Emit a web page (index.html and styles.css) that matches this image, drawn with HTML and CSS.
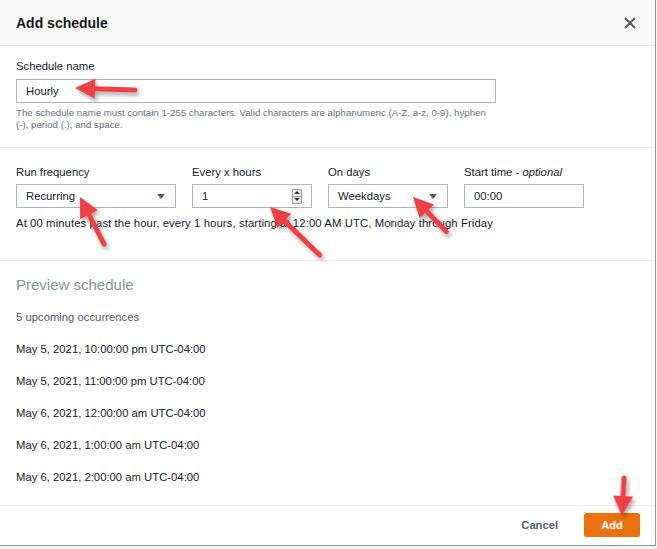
FILE: index.html
```html
<!DOCTYPE html>
<html lang="en">
<head>
<meta charset="utf-8">
<title>Add schedule</title>
<link rel="stylesheet" href="styles.css">
</head>
<body>
<div class="modal">
  <div class="header">
    <h1 class="title">Add schedule</h1>
    <svg class="close" width="12" height="12" viewBox="0 0 12 12"><path d="M1 1 L11 11 M11 1 L1 11" stroke="#545b64" stroke-width="1.8" fill="none"/></svg>
  </div>

  <div class="section name-section">
    <div class="label">Schedule name</div>
    <div class="input wide"><span>Hourly</span></div>
    <div class="help">The schedule name must contain 1-255 characters. Valid characters are alphanumeric (A-Z, a-z, 0-9), hyphen (-), period (.), and space.</div>
  </div>

  <div class="section freq-section">
    <div class="fields">
      <div class="field f-wide">
        <div class="label">Run frequency</div>
        <div class="input select"><span>Recurring</span><i class="caret"></i></div>
      </div>
      <div class="field">
        <div class="label">Every x hours</div>
        <div class="input number"><span>1</span>
          <span class="spinner"><span class="spin up"><i></i></span><span class="spin down"><i></i></span></span>
        </div>
      </div>
      <div class="field">
        <div class="label">On days</div>
        <div class="input select"><span>Weekdays</span><i class="caret"></i></div>
      </div>
      <div class="field">
        <div class="label">Start time - <em>optional</em></div>
        <div class="input"><span>00:00</span></div>
      </div>
    </div>
    <div class="desc">At 00 minutes past the hour, every 1 hours, starting at 12:00 AM UTC, Monday through Friday</div>
  </div>

  <div class="preview">
    <h2 class="preview-title">Preview schedule</h2>
    <div class="count">5 upcoming occurrences</div>
    <ul class="dates">
      <li>May 5, 2021, 10:00:00 pm UTC-04:00</li>
      <li>May 5, 2021, 11:00:00 pm UTC-04:00</li>
      <li>May 6, 2021, 12:00:00 am UTC-04:00</li>
      <li>May 6, 2021, 1:00:00 am UTC-04:00</li>
      <li>May 6, 2021, 2:00:00 am UTC-04:00</li>
    </ul>
  </div>

  <div class="footer">
    <button class="btn cancel">Cancel</button>
    <button class="btn primary">Add</button>
  </div>

  <svg class="arrows" width="656" height="546" viewBox="0 0 656 546">
    <defs>
      <filter id="sh" x="-50%" y="-50%" width="200%" height="200%">
        <feDropShadow dx="2" dy="3" stdDeviation="2" flood-color="#000" flood-opacity="0.35"/>
      </filter>
      <g id="arr">
        <polygon points="0,0 20,-10 20,10" fill="#ef4046"/>
      </g>
    </defs>
    <g filter="url(#sh)">
      <g transform="translate(75 88) rotate(2)">
        <use href="#arr"/><line x1="18" y1="0" x2="60" y2="0" stroke="#ef4046" stroke-width="5" stroke-linecap="round"/>
      </g>
      <g transform="translate(80 197) rotate(63)">
        <use href="#arr"/><line x1="18" y1="0" x2="53" y2="0" stroke="#ef4046" stroke-width="5" stroke-linecap="round"/>
      </g>
      <g transform="translate(270 207) rotate(44)">
        <use href="#arr"/><line x1="18" y1="0" x2="69" y2="0" stroke="#ef4046" stroke-width="5" stroke-linecap="round"/>
      </g>
      <g transform="translate(413 197) rotate(46)">
        <use href="#arr"/><line x1="18" y1="0" x2="48" y2="0" stroke="#ef4046" stroke-width="5" stroke-linecap="round"/>
      </g>
      <g transform="translate(622 516) rotate(-87)">
        <use href="#arr"/><line x1="18" y1="0" x2="38" y2="0" stroke="#ef4046" stroke-width="5" stroke-linecap="round"/>
      </g>
    </g>
  </svg>
</div>
</body>
</html>
```

FILE: styles.css
```css
* { box-sizing: border-box; }

body {
  margin: 0;
  background: #f2f3f3;
  font-family: "Liberation Sans", Arial, sans-serif;
  font-size: 11.3px;
  color: #16191f;
}

.modal {
  position: relative;
  width: 656px;
  height: 546px;
  background: #fff;
  border-right: 1px solid #8d9a9b;
  border-bottom: 1px solid #8d9a9b;
  display: flex;
  flex-direction: column;
}

.header {
  height: 46px;
  background: #fafafa;
  border-bottom: 1px solid #eaeded;
  display: flex;
  align-items: center;
  justify-content: space-between;
  padding: 0 19px 0 16px;
}

.title {
  margin: 0;
  font-size: 14px;
  font-weight: 700;
  color: #16191f;
}

.close { display: block; }

.section {
  border-bottom: 1px solid #eaeded;
  padding: 0 16px;
}

.name-section {
  padding-top: 12px;
  padding-bottom: 16px;
}

.label {
  line-height: 16px;
  color: #16191f;
}

.label em { font-style: italic; }

.input {
  height: 24px;
  border: 1px solid #aab7b8;
  display: flex;
  align-items: center;
  padding: 0 9px;
  margin-top: 4px;
  color: #16191f;
}

.name-section .input { margin-top: 5px; }

.wide { width: 480px; }

.help {
  margin-top: 4px;
  width: 480px;
  font-size: 9.7px;
  line-height: 12px;
  color: #687078;
}

.freq-section {
  padding-top: 16px;
  padding-bottom: 29px;
}

.fields {
  display: flex;
  gap: 16px;
}

.field { width: 120px; }
.field.f-wide { width: 160px; }

.select { justify-content: space-between; padding-right: 10px; }

.caret {
  width: 0;
  height: 0;
  border-left: 4px solid transparent;
  border-right: 4px solid transparent;
  border-top: 5px solid #545b64;
}

.number { justify-content: space-between; padding-right: 9px; }

.spinner {
  display: flex;
  flex-direction: column;
  width: 10px;
  height: 15px;
  border: 1px solid #9a9a9a;
  background: #efefef;
}

.spin {
  flex: 1;
  display: flex;
  align-items: center;
  justify-content: center;
}

.spin.up { border-bottom: 1px solid #9a9a9a; }

.spin i {
  width: 0;
  height: 0;
  border-left: 3px solid transparent;
  border-right: 3px solid transparent;
}

.spin.up i { border-bottom: 3px solid #333; }
.spin.down i { border-top: 3px solid #333; }

.desc {
  margin-top: 7px;
  line-height: 16px;
  letter-spacing: 0.1px;
}

.preview {
  flex: 1;
  padding: 14px 16px 0;
}

.preview-title {
  margin: 0;
  font-size: 15px;
  font-weight: 400;
  line-height: 20px;
  color: #879596;
}

.count {
  margin-top: 14px;
  line-height: 16px;
  color: #545b64;
}

.dates {
  list-style: none;
  margin: 0;
  padding: 0;
}

.dates li {
  margin-top: 16px;
  line-height: 16px;
}

.footer {
  border-top: 1px solid #eaeded;
  display: flex;
  justify-content: flex-end;
  align-items: center;
  padding: 7px 15px 8px;
}

.btn {
  font-family: "Liberation Sans", Arial, sans-serif;
  font-size: 11.2px;
  font-weight: 700;
  height: 24px;
  border: none;
  padding: 0;
  cursor: pointer;
}

.cancel {
  background: transparent;
  color: #545b64;
  margin-right: 26px;
}

.primary {
  width: 56px;
  background: #ec7211;
  color: #fff;
  border-radius: 2px;
}

.arrows {
  position: absolute;
  left: 0;
  top: 0;
  pointer-events: none;
}
```
